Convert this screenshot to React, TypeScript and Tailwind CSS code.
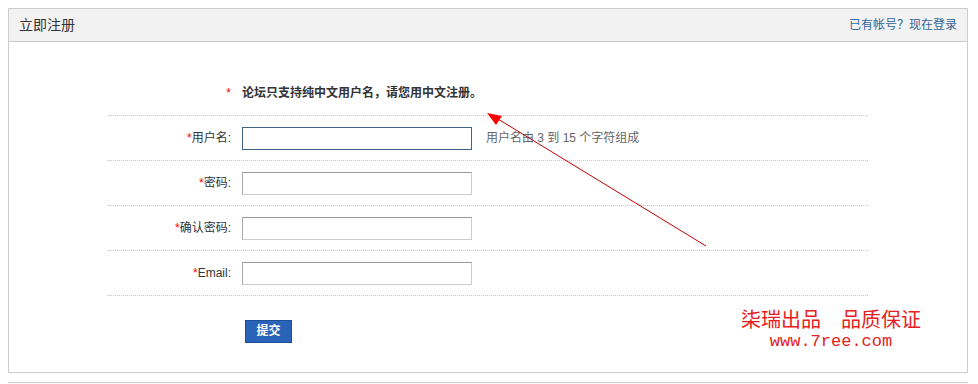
import React from 'react';

const font = { fontFamily: '"Liberation Sans", "Noto Sans CJK SC", sans-serif' };

interface IRow {
  label: string;
  focused?: boolean;
  hint?: string;
}

const rows: IRow[] = [
  { label: '用户名:', focused: true, hint: '用户名由 3 到 15 个字符组成' },
  { label: '密码:' },
  { label: '确认密码:' },
  { label: 'Email:' }
];

function FormRow({ label, focused, hint }: IRow) {
  return (
    <div className="flex items-center h-[45px] border-b border-dotted border-[#c8c8c8]">
      <div className="w-[134px] pr-[11px] text-right text-[12px] text-[#333]">
        <span className="text-[#f00]">*</span>
        {label}
      </div>
      <input
        className={
          focused
            ? 'w-[230px] h-[23px] border border-[#3f6384] bg-white outline-none'
            : 'w-[230px] h-[23px] border border-[#ccc] border-t-[#999] border-l-[#aaa] bg-white outline-none'
        }
      />
      {hint && <span className="ml-[14px] text-[12px] text-[#666]">{hint}</span>}
    </div>
  );
}

export default function App() {
  return (
    <div className="relative w-[978px] h-[384px] bg-white pt-2 pl-2" style={font}>
      <div className="w-[960px] h-[365px] border border-[#ccc]">
        <div className="flex items-center justify-between h-[33px] bg-[#f2f2f2] border-b border-[#ccc] px-[10px]">
          <span className="text-[14px] text-[#333]">立即注册</span>
          <a className="text-[12px] text-[#336699]">已有帐号？现在登录</a>
        </div>

        <div className="pt-[29px] pl-[99px]">
          <div className="w-[760px]">
            <div className="flex items-center h-[45px] border-b border-dotted border-[#c8c8c8]">
              <div className="w-[134px] pr-[11px] text-right text-[12px] text-[#f00]">*</div>
              <span className="text-[12px] font-bold text-[#333]">
                论坛只支持纯中文用户名，请您用中文注册。
              </span>
            </div>
            {rows.map((r) => (
              <FormRow key={r.label} {...r} />
            ))}
          </div>
          <div className="pt-[22px] pl-[137px]">
            <button className="w-[47px] h-[23px] bg-[#2a64b9] border border-[#1d4f99] text-white text-[12px] font-bold">
              提交
            </button>
          </div>
        </div>
      </div>
      <div className="mt-[9px] w-[960px] border-t border-[#ccc]" />

      <div className="absolute left-[736px] top-[306px] w-[190px] text-center text-[#e62020]">
        <div
          className="text-[20px] leading-[26px]"
          style={{ fontFamily: '"Noto Sans CJK SC", sans-serif' }}
        >
          柒瑞出品　品质保证
        </div>
        <div
          className="text-[17px] leading-[20px]"
          style={{ fontFamily: '"Liberation Mono", monospace' }}
        >
          www.7ree.com
        </div>
      </div>

      <svg
        className="absolute left-0 top-0 pointer-events-none"
        width="978"
        height="384"
        viewBox="0 0 978 384"
      >
        <line x1="706" y1="246" x2="498" y2="119" stroke="#c00000" strokeWidth="1" />
        <polygon points="487,113 502,116 496,125" fill="#ff0000" />
      </svg>
    </div>
  );
}
